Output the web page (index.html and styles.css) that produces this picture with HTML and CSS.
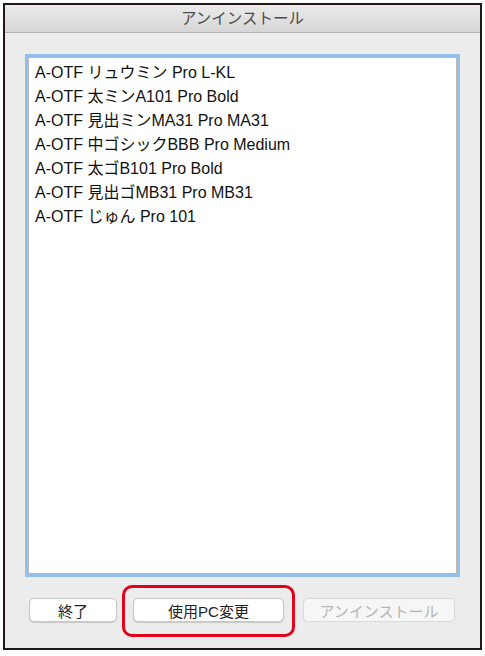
FILE: index.html
```html
<!DOCTYPE html>
<html lang="ja">
<head>
<meta charset="UTF-8">
<title>アンインストール</title>
<link rel="stylesheet" href="styles.css">
</head>
<body>
  <div class="window">
    <div class="titlebar">アンインストール</div>
    <div class="content">
      <div class="list">
        <div class="item">A-OTF リュウミン Pro L-KL</div>
        <div class="item">A-OTF 太ミンA101 Pro Bold</div>
        <div class="item">A-OTF 見出ミンMA31 Pro MA31</div>
        <div class="item">A-OTF 中ゴシックBBB Pro Medium</div>
        <div class="item">A-OTF 太ゴB101 Pro Bold</div>
        <div class="item">A-OTF 見出ゴMB31 Pro MB31</div>
        <div class="item">A-OTF じゅん Pro 101</div>
      </div>
      <div class="buttons">
        <button class="btn btn-quit">終了</button>
        <span class="highlight">
          <button class="btn btn-change">使用PC変更</button>
        </span>
        <button class="btn btn-uninstall" disabled>アンインストール</button>
      </div>
    </div>
  </div>
</body>
</html>
```

FILE: styles.css
```css
body {
  margin: 0;
  padding: 0;
  background: #fff;
  font-family: "Liberation Sans", "Noto Sans CJK JP", sans-serif;
}

.window {
  margin: 3px 3px 0 3px;
  width: 475px;
  height: 643px;
  border: 2px solid #231815;
  background: #ececec;
  display: flex;
  flex-direction: column;
}

.titlebar {
  height: 27px;
  line-height: 28px;
  text-align: center;
  font-size: 15.5px;
  color: #4a4a4a;
  background: linear-gradient(#ebebeb, #d6d6d6);
  border-bottom: 1px solid #b4b4b4;
}

.content {
  flex: 1;
  padding: 21px 20px 0 20px;
  display: flex;
  flex-direction: column;
}

.list {
  height: 512px;
  background: #fff;
  border: 1px solid #b8b8b8;
  box-shadow: 0 0 0 3px #94bfe8;
  margin: 3px;
  padding: 3px 0 0 6px;
  font-size: 16px;
  color: #111;
}

.item {
  height: 24px;
  line-height: 24px;
  white-space: nowrap;
}

.buttons {
  display: flex;
  align-items: center;
  margin-top: 21px;
  padding-left: 4px;
}

.btn {
  height: 24px;
  padding: 0;
  background: #fff;
  border: 1px solid #c6c6c6;
  border-radius: 5px;
  box-shadow: 0 1px 1px rgba(0, 0, 0, 0.15);
  font-family: "Liberation Sans", "Noto Sans CJK JP", sans-serif;
  font-size: 15px;
  color: #222;
}

.btn-quit {
  width: 88px;
}

.highlight {
  position: relative;
  margin-left: 16px;
  display: flex;
}

.highlight::after {
  content: "";
  position: absolute;
  left: -11px;
  top: -13px;
  width: 167px;
  height: 46px;
  border: 3px solid #e3001b;
  border-radius: 10px;
}

.btn-change {
  width: 151px;
}

.btn-uninstall {
  width: 152px;
  margin-left: 19px;
  color: #b5b5b5;
  border-color: #dadada;
  background: #f6f6f6;
  box-shadow: none;
}
```
